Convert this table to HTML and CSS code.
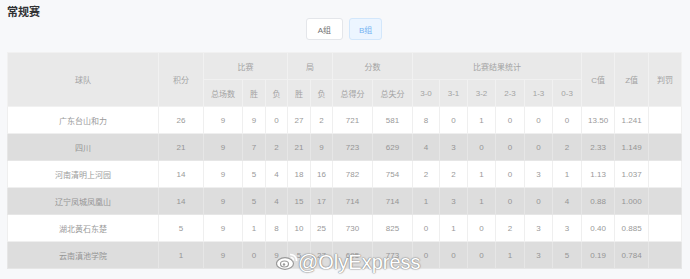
FILE: index.html
```html
<!DOCTYPE html>
<html lang="zh">
<head>
<meta charset="utf-8">
<link rel="stylesheet" href="styles.css">
</head>
<body>
<div class="page">
  <div class="title">常规赛</div>
  <div class="tabs">
    <button class="btn">A组</button>
    <button class="btn active">B组</button>
  </div>
  <table class="standings">
    <colgroup>
      <col style="width:151px"><col style="width:45px"><col style="width:39px"><col style="width:23px"><col style="width:22px"><col style="width:23px"><col style="width:22px"><col style="width:40px"><col style="width:40px"><col style="width:27px"><col style="width:28px"><col style="width:28px"><col style="width:29px"><col style="width:28px"><col style="width:29px"><col style="width:33px"><col style="width:34px"><col style="width:33px">
    </colgroup>
    <thead>
      <tr>
        <th rowspan="2">球队</th>
        <th rowspan="2">积分</th>
        <th colspan="3">比赛</th>
        <th colspan="2">局</th>
        <th colspan="2">分数</th>
        <th colspan="6">比赛结果统计</th>
        <th rowspan="2">C值</th>
        <th rowspan="2">Z值</th>
        <th rowspan="2">判罚</th>
      </tr>
      <tr>
        <th>总场数</th><th>胜</th><th>负</th><th>胜</th><th>负</th><th>总得分</th><th>总失分</th><th>3-0</th><th>3-1</th><th>3-2</th><th>2-3</th><th>1-3</th><th>0-3</th>
      </tr>
    </thead>
    <tbody>
      <tr><td>广东台山和力</td><td>26</td><td>9</td><td>9</td><td>0</td><td>27</td><td>2</td><td>721</td><td>581</td><td>8</td><td>0</td><td>1</td><td>0</td><td>0</td><td>0</td><td>13.50</td><td>1.241</td><td></td></tr>
      <tr><td>四川</td><td>21</td><td>9</td><td>7</td><td>2</td><td>21</td><td>9</td><td>723</td><td>629</td><td>4</td><td>3</td><td>0</td><td>0</td><td>0</td><td>2</td><td>2.33</td><td>1.149</td><td></td></tr>
      <tr><td>河南清明上河园</td><td>14</td><td>9</td><td>5</td><td>4</td><td>18</td><td>16</td><td>782</td><td>754</td><td>2</td><td>2</td><td>1</td><td>0</td><td>3</td><td>1</td><td>1.13</td><td>1.037</td><td></td></tr>
      <tr><td>辽宁凤城凤凰山</td><td>14</td><td>9</td><td>5</td><td>4</td><td>15</td><td>17</td><td>714</td><td>714</td><td>1</td><td>3</td><td>1</td><td>0</td><td>0</td><td>4</td><td>0.88</td><td>1.000</td><td></td></tr>
      <tr><td>湖北黄石东楚</td><td>5</td><td>9</td><td>1</td><td>8</td><td>10</td><td>25</td><td>730</td><td>825</td><td>0</td><td>1</td><td>0</td><td>2</td><td>3</td><td>3</td><td>0.40</td><td>0.885</td><td></td></tr>
      <tr><td>云南滇池学院</td><td>1</td><td>9</td><td>0</td><td>9</td><td>5</td><td>27</td><td>695</td><td>773</td><td>0</td><td>0</td><td>0</td><td>1</td><td>3</td><td>5</td><td>0.19</td><td>0.784</td><td></td></tr>
    </tbody>
  </table>
</div>
<div class="watermark">
  <svg class="wb-logo" width="22" height="18" viewBox="0 0 22 18">
    <ellipse cx="9" cy="11.5" rx="8.5" ry="5.8" fill="#fff" stroke="#9a9a9a" stroke-width="1.2"/>
    <ellipse cx="8.5" cy="12" rx="4" ry="3" fill="none" stroke="#9a9a9a" stroke-width="1.2"/>
    <circle cx="8" cy="12.5" r="1.2" fill="#9a9a9a"/>
    <path d="M14 2.5 A6 6 0 0 1 20.5 9" fill="none" stroke="#fff" stroke-width="1.6"/>
    <path d="M14.5 5.5 A3 3 0 0 1 17.5 8.5" fill="none" stroke="#fff" stroke-width="1.4"/>
  </svg>
  <span class="wb-text">@OlyExpress</span>
</div>
</body>
</html>
```
FILE: styles.css
```css
html, body {
  margin: 0;
  padding: 0;
  background: #f7f8fa;
  font-family: "Liberation Sans", "Noto Sans CJK SC", sans-serif;
}
.page {
  padding: 6px 9px 0 7px;
}
.title {
  height: 12px;
  line-height: 12px;
  font-size: 11px;
  font-weight: bold;
  color: #303133;
}
.tabs {
  display: flex;
  justify-content: center;
  gap: 6px;
}
.btn {
  height: 22px;
  padding: 0 11px;
  font-family: inherit;
  font-size: 8px;
  color: #707070;
  background: #fff;
  border: 1px solid #e4e6ea;
  border-radius: 3px;
}
.btn.active {
  color: #74b3f2;
  background: #ecf5ff;
  border-color: #d3e7fb;
  padding: 0 9px;
}
.standings {
  margin-top: 12px;
  width: 674px;
  table-layout: fixed;
  border-collapse: collapse;
  font-size: 8px;
  color: #9a9a9a;
}
.standings th {
  background: #e9e9e9;
  font-weight: normal;
  color: #a3a3a3;
  height: 26px;
  border: 1px solid #f1f1f1;
  text-align: center;
  padding: 0;
}
.standings td {
  height: 26px;
  text-align: center;
  border: 1px solid #efefef;
  padding: 0;
  background: #fff;
}
.standings tbody tr:nth-child(even) td {
  background: #dddddd;
  border-color: #e6e6e6;
  color: #959595;
}
.watermark {
  position: absolute;
  left: 276px;
  top: 251px;
  display: flex;
  align-items: flex-end;
}
.wb-logo {
  margin-bottom: 3px;
}
.wb-text {
  font-family: "Liberation Sans", sans-serif;
  font-size: 20px;
  line-height: 22px;
  color: #fff;
  text-shadow: 0 0 1px #888, 0 0 1px #888, 0 0 2px #999;
}
```
